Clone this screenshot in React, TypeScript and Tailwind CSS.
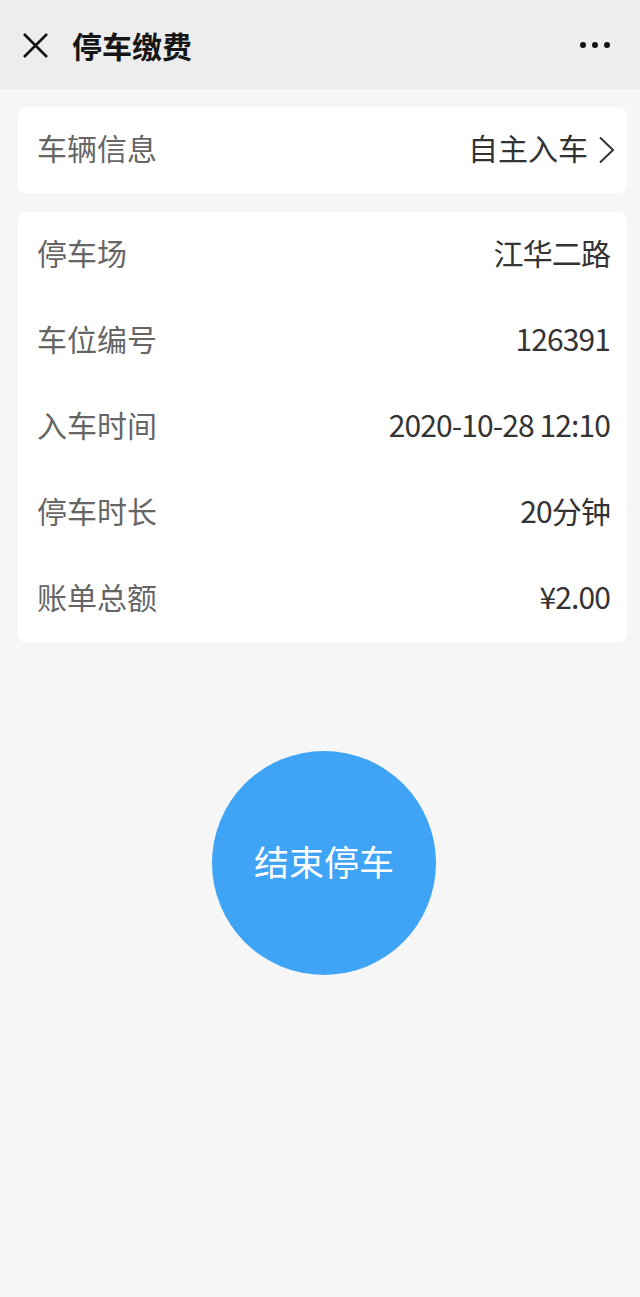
import React from 'react';

const rows = [
  { label: '停车场', value: '江华二路' },
  { label: '车位编号', value: '126391' },
  { label: '入车时间', value: '2020-10-28 12:10' },
  { label: '停车时长', value: '20分钟' },
  { label: '账单总额', value: '¥2.00' },
];

const font = { fontFamily: '"Noto Sans CJK SC", "Noto Sans", sans-serif' };

const App: React.FC = () => {
  return (
    <div className="min-h-[1297px] bg-[#f6f6f6] flex flex-col" style={font}>
      {/* header */}
      <div className="h-[89px] bg-[#ededed] flex items-center px-[22px]">
        <svg width="27" height="27" viewBox="0 0 27 27" className="mr-[23px] mt-[2px]">
          <path d="M2 2 L25 25 M25 2 L2 25" stroke="#111" strokeWidth="2.6" fill="none" />
        </svg>
        <span className="text-[30px] font-semibold text-[#161616] leading-none">停车缴费</span>
        <div className="ml-auto flex items-center gap-[6px] mr-[8px]">
          <span className="w-[6px] h-[6px] rounded-full bg-[#111]" />
          <span className="w-[6px] h-[6px] rounded-full bg-[#111]" />
          <span className="w-[6px] h-[6px] rounded-full bg-[#111]" />
        </div>
      </div>

      <div className="px-[18px] pt-[18px] pr-[13px]">
        {/* vehicle info */}
        <div className="h-[86px] bg-white rounded-[8px] flex items-center pl-[19px] pr-[12px] pb-[6px]">
          <span className="text-[30px] text-[#666] leading-none">车辆信息</span>
          <span className="ml-auto text-[30px] text-[#333] leading-none">自主入车</span>
          <svg width="17" height="28" viewBox="0 0 17 28" className="ml-[10px] mt-[6px]">
            <path d="M2 1.5 L15 14 L2 26.5" stroke="#333" strokeWidth="2" fill="none" />
          </svg>
        </div>

        {/* details */}
        <div className="mt-[19px] bg-white rounded-[8px] pl-[19px] pr-[17px] flex flex-col">
          {rows.map((r) => (
            <div key={r.label} className="h-[86px] flex items-center justify-between pb-[7px]">
              <span className="text-[30px] text-[#666] leading-none">{r.label}</span>
              <span className="text-[30px] text-[#333] leading-none tracking-[-0.9px]">{r.value}</span>
            </div>
          ))}
        </div>
      </div>

      <div className="flex justify-center mt-[109px] pl-[8px]">
        <button className="w-[224px] h-[224px] rounded-full bg-[#3fa3f6] text-white text-[35px] flex items-center justify-center pb-[4px]">
          结束停车
        </button>
      </div>
    </div>
  );
};

export default App;
